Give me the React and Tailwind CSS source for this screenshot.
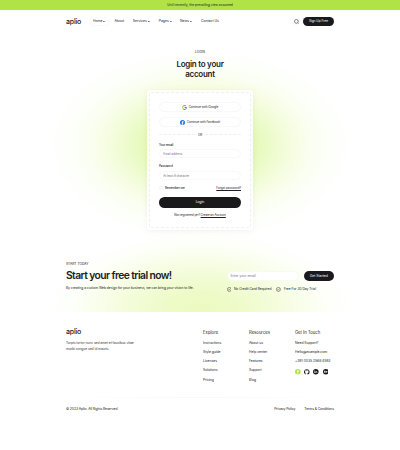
import React from "react";

const Caret = () => (
  <svg viewBox="0 0 6 4" className="ml-[0.8px] h-[1.6px] w-[2.4px]" fill="none" stroke="#2b2b2f" strokeWidth="2">
    <path d="M0.5 0.8 3 2.8 5.5 0.8" />
  </svg>
);

const navItems = [
  { label: "Home", caret: true, cls: "w-[21px] rounded-full border-[0.5px] border-[#f8f8f8] pl-[2.9px]" },
  { label: "About", caret: false, cls: "ml-[4.5px] w-[18.3px]" },
  { label: "Services", caret: true, cls: "w-[26px]" },
  { label: "Pages", caret: true, cls: "w-[21.2px]" },
  { label: "News", caret: true, cls: "w-[21px]" },
  { label: "Contact Us", caret: false, cls: "w-[20px]" },
];

const Google = () => (
  <svg viewBox="0 0 24 24" className="h-[5px] w-[5px]" fill="none" strokeWidth="4.6">
    <path d="M19.5 5.5A10 10 0 0 0 3.6 7.8" stroke="#ea4335" />
    <path d="M3.6 7.8a10 10 0 0 0 0 8.4" stroke="#fbbc05" />
    <path d="M3.6 16.2a10 10 0 0 0 14.9 3.3" stroke="#34a853" />
    <path d="M18.5 19.5a9.5 9.5 0 0 0 3.3-7.5H12" stroke="#4285f4" />
  </svg>
);

const Facebook = () => (
  <svg viewBox="0 0 24 24" className="h-[5px] w-[5px]">
    <circle cx="12" cy="12" r="12" fill="#1877e8" />
    <path d="M10 24v-8H7v-4h3V9.500q0-4.500 4.500-4.500H17v3.500h-1.800q-1.700 0-1.700 1.700V12H17l-.6 4h-2.900v8z" fill="#fff" />
  </svg>
);

const Check = () => (
  <svg viewBox="0 0 24 24" className="h-[4.800px] w-[4.800px]" fill="none" stroke="#202024" strokeWidth="2.300">
    <circle cx="12" cy="12" r="10" />
    <path d="m7.500 12 3.500 3.500 7-7.500" />
  </svg>
);

const columns = [
  { title: "Explore", tcls: "tracking-[0.05px]", items: ["Instructions", "Style guide", "Licenses", "Solutions", "Pricing"] },
  { title: "Resources", tcls: "tracking-[0.02px]", items: ["About us", "Help center", "Features", "Support", "Blog"] },
];

function Social() {
  return (
    <div className="mt-[2.700px] flex h-[5.600px] gap-[3.600px]">
      <svg viewBox="0 0 24 24" className="h-[5.600px] w-[5.600px]">
        <circle cx="12" cy="12" r="12" fill="#b1e346" />
        <path d="M10.300 20v-7H8v-3h2.300V8q0-3.500 3.500-3.500h2v3h-1.300q-1.200 0-1.200 1.200V10H16l-.4 3h-2.300v7z" fill="#fff" />
      </svg>
      <svg viewBox="0 0 24 24" className="h-[5.600px] w-[5.600px]">
        <path
          fill="#1a1a1d"
          d="M12 .6a12 12 0 0 0-3.800 23.400c.6.100.8-.3.800-.6v-2.200c-3.300.7-4-1.400-4-1.400-.6-1.400-1.400-1.800-1.400-1.800-1-.7.1-.7.100-.7 1.200.1 1.900 1.200 1.900 1.200 1 1.900 2.800 1.300 3.500 1 .1-.8.4-1.300.8-1.600-2.700-.3-5.500-1.300-5.500-5.900 0-1.300.5-2.400 1.200-3.200-.1-.3-.5-1.500.1-3.200 0 0 1-.3 3.300 1.200a11.500 11.500 0 0 1 6 0c2.300-1.500 3.300-1.200 3.300-1.200.7 1.700.2 2.900.1 3.200.8.8 1.200 1.900 1.200 3.200 0 4.600-2.800 5.600-5.500 5.900.4.400.8 1.100.8 2.200v3.300c0 .3.200.7.800.6A12 12 0 0 0 12 .6"
        />
      </svg>
      <svg viewBox="0 0 24 24" className="h-[5.600px] w-[5.600px]">
        <circle cx="12" cy="12" r="12" fill="#1a1a1d" />
        <path d="M6 10h2.500v7H6zM6 6.500h2.500v2.200H6zM10.500 10H13v1q2.500-2.200 5 .5V17h-2.500v-4q-1.200-2-2.500 0v4h-2.500z" fill="#fff" />
      </svg>
      <svg viewBox="0 0 24 24" className="h-[5.600px] w-[5.600px]">
        <circle cx="12" cy="12" r="12" fill="#1a1a1d" />
        <path d="M5 8h4q3 0 2 3.500 2 4.500-2 4.500H5zM7 10v1.200h2V10zm0 2.800V14h2v-1.200zM13 12q.5-3 3.200-3t3 4h-4q1 2 3.500.8-1 2.700-3.500 2.200-2.400-.7-2.200-4M14.500 7h3.500v1h-3.500z" fill="#fff" />
      </svg>
    </div>
  );
}

export default function App() {
  return (
    <div className="h-[450px] w-[400px] overflow-hidden bg-white font-['Inter',sans-serif] text-[3.4px] leading-none whitespace-nowrap text-[#202024]">
      <div className="h-[10.500px]">
        <div className="flex h-[10.400px] items-center justify-center bg-[#b1e346] pt-[1.800px] text-[3.250px]">
          Until recently, the prevailing view assumed
        </div>
      </div>

      <header className="mx-auto flex h-[21.500px] w-[268px] items-center">
        <div className="w-[23px] text-[7px] font-medium tracking-[-0.200px]">aplio</div>
        <nav className="flex h-[8.500px] items-center">
          {navItems.map((n) => (
            <div key={n.label} className={`flex h-full items-center pt-[0.800px] ${n.cls}`}>
              {n.label}
              {n.caret && <Caret />}
            </div>
          ))}
        </nav>
        <div className="ml-auto flex h-[9px] w-[9px] items-center justify-center rounded-full bg-[#fcfcfc]">
          <svg viewBox="0 0 24 24" className="h-[5px] w-[5px]" fill="none" stroke="#202024" strokeWidth="2.500">
            <circle cx="11.500" cy="11.500" r="9" />
            <path d="m18 18 4 4" />
          </svg>
        </div>
        <button className="ml-[2px] flex h-[8.500px] w-[31px] items-center justify-center rounded-full bg-[#1a1a1d] pt-[0.800px] text-[3.150px] text-white">
          Sign Up Free
        </button>
      </header>

      <main className="h-[280px] bg-[radial-gradient(ellipse_152px_96px_at_200px_113px,#dff8a8_0%,#e4f9b4_33%,#ecfbca_46%,#f5fde0_60%,#fbfef2_74%,#fdfffa_87%,#ffffff00_100%),radial-gradient(ellipse_150px_78px_at_200px_278px,#ebfabf_0%,#eefbc9_25%,#f3fcd9_48%,#f9feeb_68%,#fdfff8_84%,#ffffff00_100%)] bg-blend-multiply">
        <section className="flex h-[226px] flex-col items-center pt-[18.200px]">
          <div className="flex h-[4px] items-center text-[3.200px]">LOGIN</div>
          <h1 className="mt-[5.200px] text-center text-[8px] leading-[10px] font-semibold tracking-[-0.260px]">
            Login to your
            <br />
            account
          </h1>
          <div className="mt-[10.500px] h-[140px] w-[106px] rounded-[4px] bg-white/85 p-[2.300px] shadow-[0_1px_6px_rgba(0,0,0,0.05)]">
            <form className="flex h-full flex-col rounded-[2px] border-[0.500px] border-dashed border-[#f0f0f0] bg-white px-[8.700px] pt-[8.700px] text-[3px]">
              <div className="flex h-[10.500px] shrink-0 items-center justify-center gap-[1.800px] rounded-full border-[0.500px] border-[#f8f8f8]">
                <Google />
                <span className="tracking-[-0.05px]">Continue with Google</span>
              </div>
              <div className="mt-[4.500px] flex h-[10.500px] shrink-0 items-center justify-center gap-[1.800px] rounded-full border-[0.500px] border-[#f8f8f8]">
                <Facebook />
                <span className="tracking-[-0.05px]">Continue with Facebook</span>
              </div>
              <div className="mt-[5px] flex h-[4px] shrink-0 items-center gap-[2.500px]">
                <span className="flex-1 border-t-[0.500px] border-dashed border-[#f0f0f0]" />
                <span className="pt-[1.800px]">OR</span>
                <span className="flex-1 border-t-[0.500px] border-dashed border-[#f0f0f0]" />
              </div>
              <label className="mt-[6.800px] flex h-[4px] shrink-0 items-center font-medium tracking-[-0.09px]">Your email</label>
              <div className="mt-[1.700px] flex h-[9.600px] shrink-0 items-center rounded-full border-[0.500px] border-[#f8f8f8] pt-[1.600px] pl-[3.200px] text-[#77777c] tracking-[-0.05px]">
                Email address
              </div>
              <label className="mt-[6.400px] flex h-[4px] shrink-0 items-center font-medium tracking-[-0.04px]">Password</label>
              <div className="mt-[1.700px] flex h-[9.800px] shrink-0 items-center rounded-full border-[0.500px] border-[#f8f8f8] pt-[1.200px] pl-[3.200px] text-[#77777c] tracking-[-0.08px]">
                At least 8 character
              </div>
              <div className="mt-[5.200px] flex h-[5px] shrink-0 items-center">
                <span className="mr-[2px] h-[4px] w-[4px] rounded-full border-[0.500px] border-[#f3f3f3]" />
                <span className="pt-[0.800px] font-medium tracking-[-0.100px]">Remember me</span>
                <span className="mt-[1px] ml-auto tracking-[-0.04px] underline decoration-[0.400px] underline-offset-[0.600px]">Forgot password?</span>
              </div>
              <button type="button" className="mt-[6.500px] flex h-[10.700px] shrink-0 items-center justify-center rounded-full bg-[#1a1a1d] pt-[1.200px] text-[3.300px] text-white">
                Login
              </button>
              <p className="mt-[6.100px] flex h-[4px] shrink-0 items-center justify-center gap-[0.700px] tracking-[-0.070px]">
                <span>Not registered yet?</span>
                <span className="underline decoration-[0.400px] underline-offset-[0.500px]">Create an Account</span>
              </p>
            </form>
          </div>
        </section>

        <section className="mx-auto flex w-[268px] justify-between pt-[3.500px]">
          <div>
            <div className="flex h-[4px] items-center pt-[1.400px] text-[3.300px]">START TODAY</div>
            <h2 className="mt-[3.500px] mb-[0.700px] flex h-[13px] items-center text-[10.300px] font-semibold tracking-[-0.580px]">
              Start your free trial now!
            </h2>
            <p className="mt-[4.600px] flex h-[4px] items-center text-[3.300px] tracking-[-0.036px]">
              By creating a custom Web design for your business, we can bring your vision to life.
            </p>
          </div>
          <div className="w-[107.500px] pt-[9.600px]">
            <div className="flex h-[10.400px] items-center justify-between">
              <div className="flex h-[10px] w-[72px] items-center rounded-full border-[0.500px] border-[#f8f9f3] bg-white pt-[0.600px] pl-[2.900px] text-[#7c7c80] tracking-[-0.04px]">
                Enter your email
              </div>
              <button className="flex h-full w-[30.400px] items-center justify-center rounded-full bg-[#1a1a1d] pt-[0.600px] text-[3.400px] text-white">
                Get Started
              </button>
            </div>
            <div className="mt-[4.700px] flex h-[6px] items-center text-[3.300px] tracking-[-0.020px]">
              <Check />
              <span className="ml-[2.600px] w-[42.600px]">No Credit Card Required</span>
              <Check />
              <span className="ml-[2.600px]">Free For 30 Day Trial</span>
            </div>
          </div>
        </section>
      </main>

      <footer className="mx-auto w-[268px]">
        <div className="flex h-[85px] pt-[15px]">
          <div className="w-[137px]">
            <div className="flex h-[9px] items-center text-[7px] font-medium tracking-[-0.200px]">aplio</div>
            <p className="mt-[4.300px] leading-[6px] tracking-[-0.090px] text-[#3b3b40]">
              Turpis tortor nunc sed amet et faucibus vitae
              <br />
              morbi congue sed id mauris.
            </p>
          </div>
          {columns.map((c) => (
            <div key={c.title} className="w-[46px]">
              <h3 className={`flex h-[10px] items-center pt-[1.600px] text-[4.200px] ${c.tcls}`}>{c.title}</h3>
              <ul className="mt-[2.200px] tracking-[-0.040px]">
                {c.items.map((i) => (
                  <li key={i} className="flex h-[9.140px] items-center">{i}</li>
                ))}
              </ul>
            </div>
          ))}
          <div>
            <h3 className="flex h-[10px] items-center pt-[1.600px] text-[4.200px]">Get In Touch</h3>
            <ul className="mt-[2.200px] tracking-[-0.040px]">
              <li className="flex h-[9.140px] items-center">Need Support?</li>
              <li className="flex h-[9.140px] items-center">Hello@example.com</li>
              <li className="flex h-[9.140px] items-center">+391 (0)35 2568 4593</li>
            </ul>
            <Social />
          </div>
        </div>
        <div className="h-px bg-linear-to-r from-transparent via-[#f8f8f8] to-transparent" />
        <div className="mt-[9.300px] flex h-[5px] items-center tracking-[-0.090px]">
          <span>© 2023 Aplio. All Rights Reserved</span>
          <span className="ml-auto">Privacy Policy</span>
          <span className="ml-[9px]">Terms &amp; Conditions</span>
        </div>
      </footer>
    </div>
  );
}
